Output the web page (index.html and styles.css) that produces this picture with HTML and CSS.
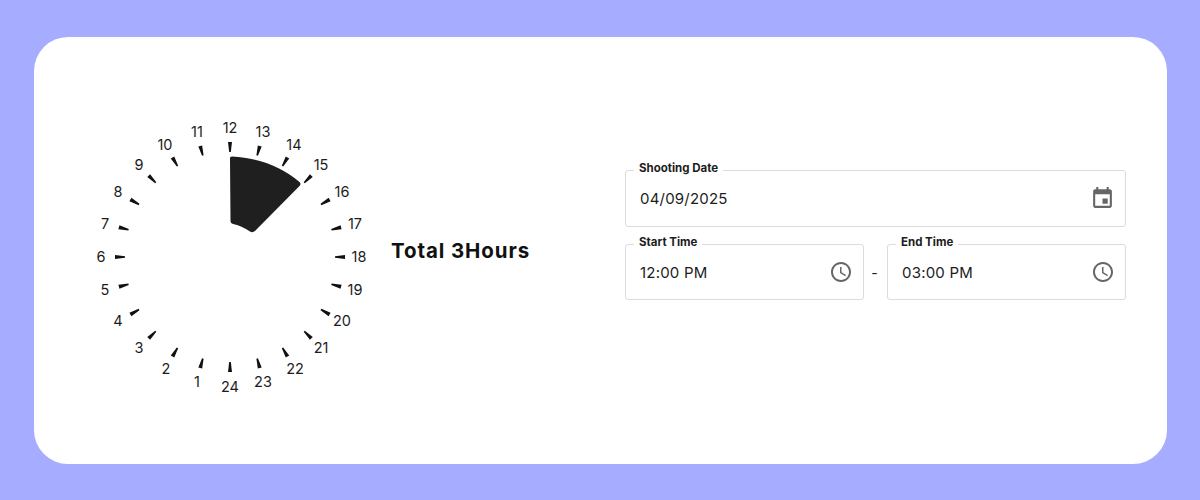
FILE: index.html
```html
<!DOCTYPE html>
<html>
<head>
    <title>Shooting Schedule</title>
    <meta name="viewport" content="width=device-width, initial-scale=1">
    <link rel="stylesheet" href="styles.css">
</head>
<body>

    <div class="card">
        <svg class="dial" width="300" height="300" viewBox="0 0 300 300">
            <defs>
                <path id="tick" d="M148 35 L152 35 L150.800 45 L149.200 45 Z"></path>
            </defs>

            <path class="wedge" d="M150 53 Q149.500 50.500 152 50.500 C180 52 203 62 219.500 76 Q221.500 78 219.500 80 L175 125 Q172.500 127 170 125.500 C165 122 158 119 153 118 Q150.500 117.500 150.500 115 Z"></path>

            <g class="ticks" transform="translate(0 1)">
                <use href="#tick"></use>
                <use href="#tick" transform="rotate(15 150 150)"></use>
                <use href="#tick" transform="rotate(30 150 150)"></use>
                <use href="#tick" transform="rotate(45 150 150)"></use>
                <use href="#tick" transform="rotate(60 150 150)"></use>
                <use href="#tick" transform="rotate(75 150 150)"></use>
                <use href="#tick" transform="rotate(90 150 150)"></use>
                <use href="#tick" transform="rotate(105 150 150)"></use>
                <use href="#tick" transform="rotate(120 150 150)"></use>
                <use href="#tick" transform="rotate(135 150 150)"></use>
                <use href="#tick" transform="rotate(150 150 150)"></use>
                <use href="#tick" transform="rotate(165 150 150)"></use>
                <use href="#tick" transform="rotate(180 150 150)"></use>
                <use href="#tick" transform="rotate(195 150 150)"></use>
                <use href="#tick" transform="rotate(210 150 150)"></use>
                <use href="#tick" transform="rotate(225 150 150)"></use>
                <use href="#tick" transform="rotate(240 150 150)"></use>
                <use href="#tick" transform="rotate(255 150 150)"></use>
                <use href="#tick" transform="rotate(270 150 150)"></use>
                <use href="#tick" transform="rotate(285 150 150)"></use>
                <use href="#tick" transform="rotate(300 150 150)"></use>
                <use href="#tick" transform="rotate(315 150 150)"></use>
                <use href="#tick" transform="rotate(330 150 150)"></use>
                <use href="#tick" transform="rotate(345 150 150)"></use>
            </g>

            <g class="hours">
                <text x="150" y="21">12</text>
                <text x="183" y="25">13</text>
                <text x="214" y="38">14</text>
                <text x="241" y="58">15</text>
                <text x="262" y="85">16</text>
                <text x="275" y="117">17</text>
                <text x="279" y="150">18</text>
                <text x="275" y="183">19</text>
                <text x="262" y="214">20</text>
                <text x="241" y="241">21</text>
                <text x="215" y="262">22</text>
                <text x="183" y="275">23</text>
                <text x="150" y="280">24</text>
                <text x="117" y="275">1</text>
                <text x="86" y="262">2</text>
                <text x="59" y="241">3</text>
                <text x="38" y="214">4</text>
                <text x="25" y="183">5</text>
                <text x="21" y="150">6</text>
                <text x="25" y="117">7</text>
                <text x="38" y="85">8</text>
                <text x="59" y="58">9</text>
                <text x="85" y="38">10</text>
                <text x="117" y="25">11</text>
            </g>
        </svg>

        <div class="total">Total 3Hours</div>

        <form class="schedule">
            <div class="field">
                <label>Shooting Date</label>
                <span class="value">04/09/2025</span>
                <svg class="icon icon-date" viewBox="0 0 24 24"><path d="M17 12h-5v5h5v-5zM16 1v2H8V1H6v2H5c-1.11 0-1.99.9-1.99 2L3 19c0 1.1.89 2 2 2h14c1.1 0 2-.9 2-2V5c0-1.1-.9-2-2-2h-1V1h-2zm3 18H5V8h14v11z"></path></svg>
            </div>

            <div class="time-row">
                <div class="field">
                    <label>Start Time</label>
                    <span class="value">12:00 PM</span>
                    <svg class="icon" viewBox="0 0 24 24"><path d="M11.99 2C6.47 2 2 6.48 2 12s4.47 10 9.99 10C17.52 22 22 17.52 22 12S17.52 2 11.99 2zM12 20c-4.42 0-8-3.58-8-8s3.58-8 8-8 8 3.58 8 8-3.58 8-8 8zm.5-13H11v6l5.25 3.15.75-1.23-4.5-2.67z"></path></svg>
                </div>
                <span class="dash">-</span>
                <div class="field">
                    <label>End Time</label>
                    <span class="value">03:00 PM</span>
                    <svg class="icon" viewBox="0 0 24 24"><path d="M11.99 2C6.47 2 2 6.48 2 12s4.47 10 9.99 10C17.52 22 22 17.52 22 12S17.52 2 11.99 2zM12 20c-4.42 0-8-3.58-8-8s3.58-8 8-8 8 3.58 8 8-3.58 8-8 8zm.5-13H11v6l5.25 3.15.75-1.23-4.5-2.67z"></path></svg>
                </div>
            </div>
        </form>
    </div>

</body>
</html>
```

FILE: styles.css
```css
html, body {
    margin: 0;
}

body {
    width: 1200px;
    height: 500px;
    box-sizing: border-box;
    padding: 37px 33px 36px 34px;
    background-color: #a6acff;
    font-family: Inter, 'Liberation Sans', sans-serif;
    color: #1c1c1c;
    overflow: hidden;
}

.card {
    display: flex;
    align-items: flex-start;
    height: 427px;
    box-sizing: border-box;
    padding: 69px 41px 0 46px;
    background-color: #fff;
    border-radius: 34px;
}

.dial {
    flex: none;
}

.wedge {
    fill: #1f1f1f;
}

.ticks {
    fill: #111;
}

.hours text {
    font-size: 14.5px;
    fill: #1c1c1c;
    text-anchor: middle;
    dominant-baseline: central;
}

.total {
    margin: 132px 0 0 11px;
    font-size: 20.5px;
    line-height: 26px;
    font-weight: 700;
    letter-spacing: 0.9px;
    white-space: nowrap;
    color: #111;
}

.schedule {
    display: flex;
    flex-direction: column;
    gap: 17px;
    width: 501px;
    margin: 64px 0 0 auto;
}

.time-row {
    display: flex;
    align-items: center;
}

.time-row .field {
    flex: 1;
    height: 56px;
}

.dash {
    width: 23px;
    padding-right: 2px;
    box-sizing: border-box;
    text-align: center;
    font-size: 14px;
}

.field {
    position: relative;
    display: flex;
    align-items: center;
    justify-content: space-between;
    height: 57px;
    box-sizing: border-box;
    padding: 0 11px 0 14px;
    border: 1px solid #dcdcdc;
    border-radius: 3px;
}

.field label {
    position: absolute;
    top: -10px;
    left: 8px;
    padding: 0 5px;
    background-color: #fff;
    font-size: 11.5px;
    line-height: 14px;
    font-weight: 700;
}

.value {
    font-size: 15px;
    letter-spacing: 0.2px;
}

.icon {
    width: 24px;
    height: 24px;
    margin-right: -1px;
    fill: #666;
}

.icon-date {
    width: 25px;
    height: 25px;
}
```
